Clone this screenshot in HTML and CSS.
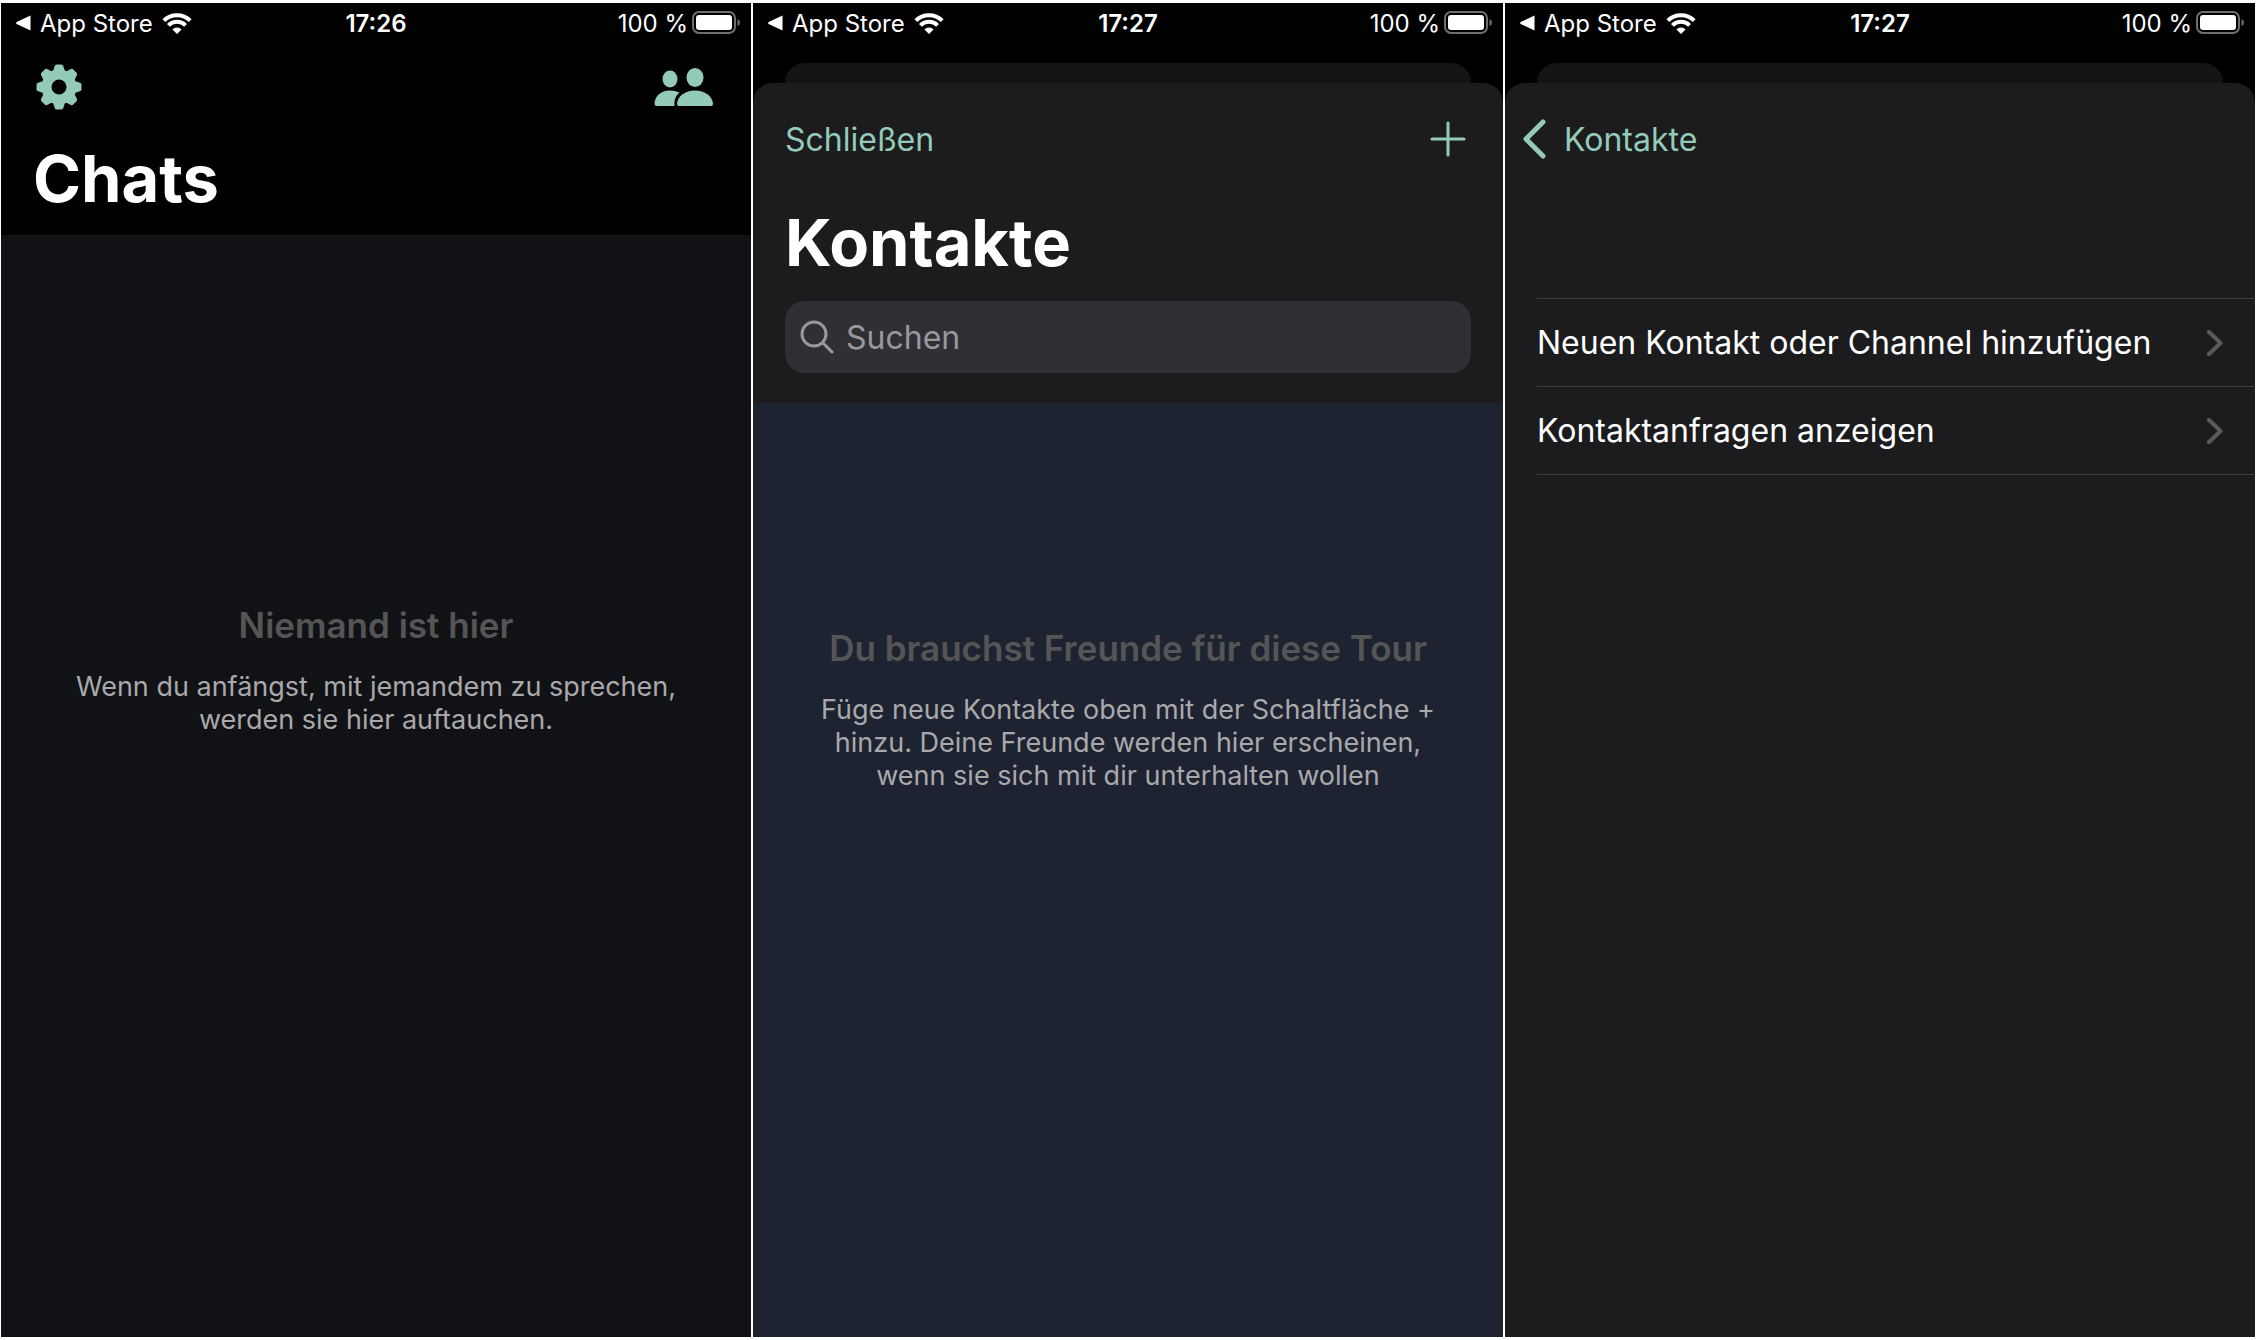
FILE: index.html
```html
<!DOCTYPE html>
<html lang="de">
	<head>
		<meta charset="utf-8">
		<meta name="viewport" content="width=device-width, initial-scale=1.0">
		<title>Chats</title>
		<link rel="stylesheet" href="styles.css">
	</head>
	<body>
		<!-- shared icons -->
		<svg class="sprite" aria-hidden="true">
			<symbol id="back-to-app" viewBox="0 0 16 16">
				<path d="M14.5.6v14.8L.6 9Q-.4 8 .6 7z" fill="currentColor"/>
			</symbol>
			<symbol id="wifi" viewBox="0 0 30 22">
				<g fill="none" stroke="currentColor" stroke-width="4">
					<path d="M1.8 8.6a18.8 18.8 0 0 1 26.4 0"/>
					<path d="M6.4 13.4a12.2 12.2 0 0 1 17.2 0"/>
				</g>
				<path d="M15 22l-4.6-4.6a6.5 6.5 0 0 1 9.2 0z" fill="currentColor"/>
			</symbol>
			<symbol id="battery" viewBox="0 0 48 24">
				<rect x="1" y="1" width="42" height="21" rx="6" fill="none" stroke="#6e6e6e" stroke-width="2"/>
				<rect x="4" y="4" width="36" height="15" rx="3" fill="#fff"/>
				<path d="M45.500 8q2.500 1 2.500 3.500t-2.500 3.500z" fill="#6e6e6e"/>
			</symbol>
			<symbol id="disclosure" viewBox="0 0 16 26">
				<path d="M2 2l11.500 11L2 24" fill="none" stroke="currentColor" stroke-width="4" stroke-linecap="round" stroke-linejoin="round"/>
			</symbol>
		</svg>

		<main class="screens">
			<section class="screen chats">
				<div class="status-bar">
					<a href="#" class="status-back"><svg class="back-icon"><use href="#back-to-app"/></svg>App Store<svg class="wifi-icon"><use href="#wifi"/></svg></a>
					<time class="status-time">17:26</time>
					<span class="status-battery">100 %<svg class="battery-icon"><use href="#battery"/></svg></span>
				</div>
				<header class="chats-header">
					<nav class="chats-nav">
						<button type="button" aria-label="Einstellungen">
							<svg width="46" height="46" viewBox="-23 -23 46 46">
								<g fill="currentColor">
									<path id="tooth" d="M-6.500 -14L-4.300 -21Q-3.700 -22.500 -2.300 -22.500H2.300Q3.700 -22.500 4.300 -21L6.500 -14z"/>
									<use href="#tooth" transform="rotate(45)"/>
									<use href="#tooth" transform="rotate(90)"/>
									<use href="#tooth" transform="rotate(135)"/>
									<use href="#tooth" transform="rotate(180)"/>
									<use href="#tooth" transform="rotate(225)"/>
									<use href="#tooth" transform="rotate(270)"/>
									<use href="#tooth" transform="rotate(315)"/>
								</g>
								<circle r="12.500" fill="none" stroke="currentColor" stroke-width="10"/>
							</svg>
						</button>
						<button type="button" aria-label="Kontakte">
							<svg width="60" height="40" viewBox="0 0 60 40" fill="currentColor">
								<ellipse cx="16" cy="12" rx="7.500" ry="8.500"/>
								<ellipse cx="41" cy="10.500" rx="8.500" ry="9.500"/>
								<path d="M25.500 25.500C21.500 29 20 33 20.500 39H3Q.5 39 .5 36.500C1 29 7 23.500 15.500 23.500Q21.500 23.500 25.500 25.500z"/>
								<path d="M25 39Q23 39 23 36.500C24 29 31 23.500 41 23.500S58 29 59 36.500Q59 39 57 39z"/>
							</svg>
						</button>
					</nav>
					<h1>Chats</h1>
				</header>
				<div class="empty">
					<h2>Niemand ist hier</h2>
					<p>Wenn du anfängst, mit jemandem zu sprechen,<br>werden sie hier auftauchen.</p>
				</div>
			</section>

			<section class="screen">
				<div class="status-bar">
					<a href="#" class="status-back"><svg class="back-icon"><use href="#back-to-app"/></svg>App Store<svg class="wifi-icon"><use href="#wifi"/></svg></a>
					<time class="status-time">17:27</time>
					<span class="status-battery">100 %<svg class="battery-icon"><use href="#battery"/></svg></span>
				</div>
				<div class="sheet-behind"></div>
				<div class="sheet">
					<nav class="sheet-nav">
						<button type="button">Schließen</button>
						<button type="button" aria-label="Kontakt hinzufügen">
							<svg width="36" height="36" viewBox="0 0 36 36">
								<path d="M18 2v32M2 18h32" fill="none" stroke="currentColor" stroke-width="3" stroke-linecap="round"/>
							</svg>
						</button>
					</nav>
					<h1>Kontakte</h1>
					<label class="search">
						<svg width="34" height="34" viewBox="0 0 34 34" aria-hidden="true">
							<g fill="none" stroke="currentColor" stroke-width="3" stroke-linecap="round">
								<circle cx="14" cy="14" r="12"/>
								<path d="M23 23l9 9"/>
							</g>
						</svg>
						<input type="search" placeholder="Suchen" aria-label="Suchen">
					</label>
					<div class="empty contacts-empty">
						<h2>Du brauchst Freunde für diese Tour</h2>
						<p>Füge neue Kontakte oben mit der Schaltfläche +<br>hinzu. Deine Freunde werden hier erscheinen,<br>wenn sie sich mit dir unterhalten wollen</p>
					</div>
				</div>
			</section>

			<section class="screen">
				<div class="status-bar">
					<a href="#" class="status-back"><svg class="back-icon"><use href="#back-to-app"/></svg>App Store<svg class="wifi-icon"><use href="#wifi"/></svg></a>
					<time class="status-time">17:27</time>
					<span class="status-battery">100 %<svg class="battery-icon"><use href="#battery"/></svg></span>
				</div>
				<div class="sheet-behind"></div>
				<div class="sheet">
					<nav class="sheet-nav with-back">
						<button type="button" class="back">
							<svg width="24" height="40" viewBox="0 0 24 40" aria-hidden="true">
								<path d="M21 3L4 20l17 17" fill="none" stroke="currentColor" stroke-width="5" stroke-linecap="round" stroke-linejoin="round"/>
							</svg>
							Kontakte
						</button>
					</nav>
					<ul class="menu">
						<li><a href="#">Neuen Kontakt oder Channel hinzufügen<svg class="disclosure-icon"><use href="#disclosure"/></svg></a></li>
						<li><a href="#">Kontaktanfragen anzeigen<svg class="disclosure-icon"><use href="#disclosure"/></svg></a></li>
					</ul>
				</div>
			</section>
		</main>
	</body>
</html>
```
FILE: styles.css
```css
* {
	box-sizing: border-box;
}
body {
	margin: 0;
	background: #fff;
	color: #fff;
	font-family: Inter, "Liberation Sans", sans-serif;
	font-size: 32px;
}
h1, h2, p, ul {
	margin: 0;
	padding: 0;
}
h1 {
	padding: 0 32px;
	font-size: 65px;
	font-weight: 700;
	line-height: 80px;
}
a {
	color: inherit;
	text-decoration: none;
}
button {
	display: flex;
	align-items: center;
	padding: 0;
	border: none;
	background: none;
	color: #93cbb8;
	font: inherit;
	cursor: pointer;
}
svg {
	flex: none;
}

.sprite {
	position: absolute;
	width: 0;
	height: 0;
}
.screens {
	display: grid;
	grid-template-columns: repeat(3, 1fr);
	gap: 2px;
	min-height: 100vh;
	padding: 3px 1px;
}
.screen {
	display: flex;
	flex-direction: column;
	background: #000;
}
.chats {
	background: #111215;
}

.status-bar {
	display: grid;
	grid-template-columns: 1fr auto 1fr;
	align-items: center;
	height: 42px;
	padding: 0 11px 2px;
	background: #000;
	font-size: 24px;
}
.status-back, .status-battery {
	display: flex;
	align-items: center;
}
.status-back {
	padding-left: 4px;
}
.status-battery {
	justify-content: flex-end;
}
.status-time {
	font-weight: 600;
}
.back-icon {
	width: 16px;
	height: 16px;
	margin-right: 8px;
}
.wifi-icon {
	width: 30px;
	height: 22px;
	margin-left: 9px;
}
.battery-icon {
	width: 48px;
	height: 24px;
	margin-left: 4px;
}

.chats-header {
	padding-bottom: 16px;
	background: #000;
}
.chats-nav {
	display: flex;
	justify-content: space-between;
	align-items: center;
	height: 84px;
	margin-bottom: 10px;
	padding: 0 37px 0 35px;
}

.sheet-behind {
	height: 40px;
	margin: 18px 32px -20px;
	border-radius: 20px 20px 0 0;
	background: #141416;
}
.sheet {
	display: flex;
	flex: 1;
	flex-direction: column;
	border-radius: 20px 20px 0 0;
	background: #1c1c1e;
	z-index: 1;
}
.sheet-nav {
	display: flex;
	justify-content: space-between;
	align-items: center;
	height: 112px;
	margin-bottom: 8px;
	padding: 0 37px 0 32px;
}
.with-back {
	padding-left: 17px;
}
.back {
	gap: 18px;
}

.search {
	display: flex;
	align-items: center;
	gap: 12px;
	height: 72px;
	margin: 18px 32px 30px;
	padding: 0 15px;
	border-radius: 20px;
	background: #303034;
	color: #98989f;
}
.search input {
	flex: 1;
	min-width: 0;
	padding: 0;
	border: none;
	outline: none;
	background: none;
	color: #fff;
	font: inherit;
}
.search input::placeholder {
	color: #98989f;
}

.empty {
	flex: 1;
	padding-top: 366px;
	text-align: center;
}
.contacts-empty {
	padding-top: 221px;
	background: #1e2332;
}
.empty h2 {
	margin-bottom: 21px;
	color: #555;
	font-size: 35px;
	font-weight: 600;
	line-height: 48px;
}
.empty p {
	color: #a9a9ab;
	font-size: 27px;
	line-height: 33px;
}

.menu {
	margin: 95px 0 0 32px;
	border-top: 1px solid #3c3c3f;
	list-style: none;
}
.menu a {
	display: flex;
	justify-content: space-between;
	align-items: center;
	height: 88px;
	padding-right: 32px;
	border-bottom: 1px solid #3c3c3f;
}
.disclosure-icon {
	width: 16px;
	height: 26px;
	color: #5a5a5e;
}
```
